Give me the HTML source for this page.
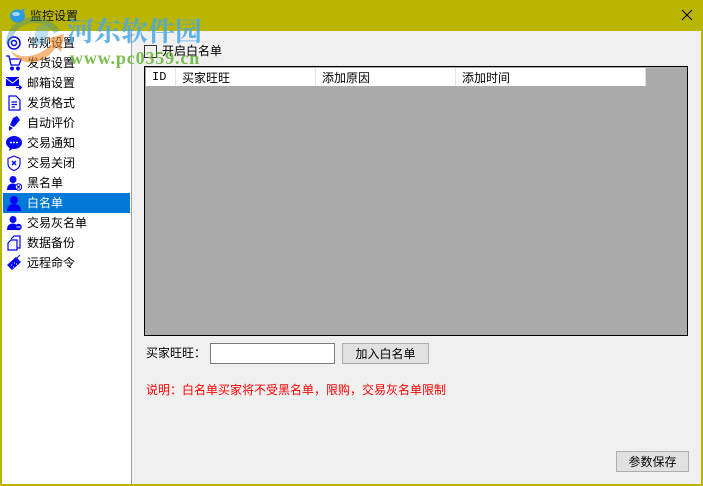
<!DOCTYPE html>
<html><head><meta charset="utf-8">
<style>
html,body{margin:0;padding:0}
body{width:703px;height:486px;overflow:hidden;position:relative;background:#f0f0f0;font:12px "WenQuanYi Zen Hei","Noto Sans CJK SC",sans-serif;color:#000}
.a{position:absolute}
.t{position:absolute;white-space:nowrap;line-height:14px;height:14px}
.ic{position:absolute;left:6px;width:16px;height:16px}
.btn{position:absolute;background:#e1e1e1;border:1px solid #adadad;box-sizing:border-box;text-align:center;line-height:19px}
.th{position:absolute;top:68px;height:18px;line-height:19px;background:#fff;border-right:1px solid #e4e4e4;box-sizing:border-box;padding-left:6px}
</style></head><body>
<div class="a" style="left:0;top:0;width:703px;height:31px;background:#b9b500"></div>
<div class="a" style="left:0;top:31px;width:2px;height:455px;background:#b9b500"></div>
<div class="a" style="left:701px;top:31px;width:2px;height:455px;background:#b9b500"></div>
<div class="a" style="left:0;top:484px;width:703px;height:2px;background:#b9b500"></div>
<div class="a" style="left:2px;top:31px;width:130px;height:453px;background:#fff;border-right:1px solid #a0a0a0;box-sizing:border-box"></div>
<div class="a" style="left:3px;top:193px;width:127px;height:20px;background:#0078d7"></div>

<svg class="a" style="left:9px;top:8px" width="17" height="15" viewBox="0 0 17 15"><ellipse cx="8.500" cy="8" rx="7.500" ry="6.500" fill="#2a9be0"/><ellipse cx="7" cy="6" rx="4" ry="2" fill="#a5dcf5"/><path d="M11 3L16 0L14 5Z" fill="#2a9be0"/></svg>
<div class="t" style="left:30px;top:9px;color:#111">监控设置</div>
<svg class="a" style="left:681px;top:9px" width="12" height="12" viewBox="0 0 12 12"><path d="M1 1L11 11M11 1L1 11" stroke="#000" stroke-width="1.100"/></svg>

<svg class="ic" style="top:35px" viewBox="0 0 16 16" fill="none" stroke="#00f" stroke-width="1.500"><circle cx="8" cy="8" r="6"/><circle cx="8" cy="8" r="2.500"/></svg>
<svg class="ic" style="top:55px" viewBox="0 0 16 16" fill="none" stroke="#00f" stroke-width="1.300"><path d="M0 1H3L5 10H13L15 4H4"/><circle cx="6" cy="13.500" r="1.300" fill="#00f"/><circle cx="12" cy="13.500" r="1.300" fill="#00f"/></svg>
<svg class="ic" style="top:75px" viewBox="0 0 16 16"><path d="M0 2H13V11H0Z" fill="#00f"/><path d="M0 3L6.500 8L13 3" fill="none" stroke="#fff"/><path d="M10 12.500H15M13 10.500L15.500 12.500L13 14.500" fill="none" stroke="#00f" stroke-width="1.300"/></svg>
<svg class="ic" style="top:95px" viewBox="0 0 16 16" fill="none" stroke="#00f" stroke-width="1.200"><path d="M3 1H10L14 5V15H3Z"/><path d="M5.500 7H11M5.500 9.500H11M5.500 12H9"/></svg>
<svg class="ic" style="top:115px" viewBox="0 0 16 16" fill="#00f"><path d="M7 3L11 1L14 5L8 12L4 10Z"/><path d="M3 11L7 13L3 16Z"/></svg>
<svg class="ic" style="top:135px" viewBox="0 0 16 16"><ellipse cx="8" cy="7.500" rx="8" ry="6.500" fill="#00f"/><path d="M4 12L3 16L8 13Z" fill="#00f"/><path d="M4 7.500H6M7 7.500H9M10 7.500H12" stroke="#fff" stroke-width="1.500"/></svg>
<svg class="ic" style="top:155px" viewBox="0 0 16 16" fill="none" stroke="#00f" stroke-width="1.100"><path d="M8 1L14 3.500V9C14 12 11 14.500 8 15.500C5 14.500 2 12 2 9V3.500Z"/><path d="M6 6L10 10M10 6L6 10" stroke-width="1.400"/></svg>
<svg class="ic" style="top:175px" viewBox="0 0 16 16"><circle cx="7" cy="4.500" r="3.500" fill="#00f"/><path d="M1 15C1 10 4 8.500 7 8.500C10 8.500 11 10 11 15Z" fill="#00f"/><circle cx="12.500" cy="12" r="3.200" fill="#fff" stroke="#00f"/><path d="M11 10.500L14 13.500M14 10.500L11 13.500" stroke="#00f"/></svg>
<svg class="ic" style="top:195px" viewBox="0 0 16 16" fill="#00f"><circle cx="8" cy="5" r="4"/><path d="M1 16C1 11 4 9 8 9C12 9 15 11 15 16Z"/></svg>
<svg class="ic" style="top:215px" viewBox="0 0 16 16"><circle cx="7" cy="4.500" r="3.500" fill="#00f"/><path d="M1 15C1 10 4 8.500 7 8.500C10 8.500 11 10 11 15Z" fill="#00f"/><circle cx="12.500" cy="12" r="3.200" fill="#00f"/><path d="M10.500 12H14.500" stroke="#fff"/></svg>
<svg class="ic" style="top:235px" viewBox="0 0 16 16" fill="none" stroke="#00f" stroke-width="1.200"><path d="M5 4L8 1H14V13H11"/><path d="M2 8L5 5H11V15H2Z" fill="#fff"/></svg>
<svg class="ic" style="top:255px" viewBox="0 0 16 16"><path d="M1 10L10 2L15 7L6 15Z" fill="#00f"/><path d="M11 3L14 0" stroke="#00f"/><path d="M5 10H6M8 8H9M7 12H8M10 9H11" stroke="#fff"/></svg>

<div class="t" style="left:27px;top:36px">常规设置</div>
<div class="t" style="left:27px;top:56px">发货设置</div>
<div class="t" style="left:27px;top:76px">邮箱设置</div>
<div class="t" style="left:27px;top:96px">发货格式</div>
<div class="t" style="left:27px;top:116px">自动评价</div>
<div class="t" style="left:27px;top:136px">交易通知</div>
<div class="t" style="left:27px;top:156px">交易关闭</div>
<div class="t" style="left:27px;top:176px">黑名单</div>
<div class="t" style="left:27px;top:196px;color:#fff">白名单</div>
<div class="t" style="left:27px;top:216px">交易灰名单</div>
<div class="t" style="left:27px;top:236px">数据备份</div>
<div class="t" style="left:27px;top:256px">远程命令</div>

<div class="a" style="left:144px;top:45px;width:13px;height:13px;border:1px solid #333;box-sizing:border-box"></div>
<div class="t" style="left:162px;top:44px">开启白名单</div>

<div class="a" style="left:144px;top:66px;width:544px;height:270px;background:#ababab;border:1px solid #000;box-sizing:border-box"></div>
<div class="th" style="left:146px;width:30px;font-family:'Liberation Mono',monospace">ID</div>
<div class="th" style="left:176px;width:140px">买家旺旺</div>
<div class="th" style="left:316px;width:140px">添加原因</div>
<div class="th" style="left:456px;width:190px;border-right:1px solid #ddd">添加时间</div>

<div class="t" style="left:146px;top:346px">买家旺旺：</div>
<div class="a" style="left:210px;top:343px;width:125px;height:21px;background:#fff;border:1px solid #7a7a7a;box-sizing:border-box"></div>
<div class="btn" style="left:342px;top:343px;width:87px;height:21px">加入白名单</div>
<div class="t" style="left:146px;top:383px;color:#f00">说明：白名单买家将不受黑名单，限购，交易灰名单限制</div>
<div class="btn" style="left:616px;top:451px;width:73px;height:21px">参数保存</div>

<svg class="a" style="left:0;top:0" width="210" height="75" viewBox="0 0 210 75">
<path d="M9 44C9 30 20 20 34 20C44 20 53 25 57 32" fill="none" stroke="#3f8f8f" stroke-width="6" opacity=".4"/>
<path d="M37 26L51 24L45 44L32 46Z" fill="#4aa3d8" opacity=".35"/>
<path d="M10 50C20 60 38 58 52 44L47 39L64 34L61 52L56 47C44 66 20 68 10 50Z" fill="#ef8a2c" opacity=".6"/>
<text x="67" y="41" font-family="'Noto Serif CJK SC',serif" font-weight="700" font-size="27" fill="#4aa8e4" opacity=".85">河东软件园</text>
<text x="70" y="64" font-family="'Liberation Serif',serif" font-weight="700" font-size="18" fill="#6cb83c" opacity=".9" letter-spacing=".85">www.pc0359.cn</text>
</svg>
</body></html>
